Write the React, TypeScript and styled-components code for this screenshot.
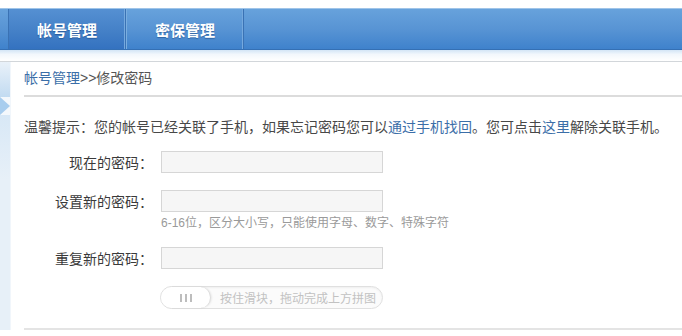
import React from "react";
import styled, { createGlobalStyle } from "styled-components";

const GlobalStyle = createGlobalStyle`
  html, body {
    margin: 0;
    padding: 0;
    background: #fff;
  }
  body {
    font-family: "Liberation Sans", "Noto Sans CJK SC", sans-serif;
    color: #333;
    overflow: hidden;
  }
`;

export default function App() {
  return (
    <>
      <GlobalStyle />
      <StyledPage>
        <StyledNav>
          <StyledTab $active>帐号管理</StyledTab>
          <StyledTab>密保管理</StyledTab>
        </StyledNav>
        <StyledNavShade />
        <StyledBody>
          <StyledSide>
            <StyledSideTop />
            <StyledPointer />
            <StyledSideRest />
          </StyledSide>
          <StyledContent>
            <StyledCrumb>
              <StyledLink>帐号管理</StyledLink>&gt;&gt;修改密码
            </StyledCrumb>
            <StyledTip>
              温馨提示：您的帐号已经关联了手机，如果忘记密码您可以
              <StyledLink>通过手机找回</StyledLink>。您可点击
              <StyledLink>这里</StyledLink>解除关联手机。
            </StyledTip>
            <StyledForm>
              <StyledField>
                <StyledLabel>现在的密码：</StyledLabel>
                <StyledInput type="password" />
              </StyledField>
              <StyledField>
                <StyledLabel>设置新的密码：</StyledLabel>
                <StyledInput type="password" />
                <StyledHint>6-16位，区分大小写，只能使用字母、数字、特殊字符</StyledHint>
              </StyledField>
              <StyledField>
                <StyledLabel>重复新的密码：</StyledLabel>
                <StyledInput type="password" />
              </StyledField>
              <StyledField>
                <span />
                <StyledSlider>
                  <StyledKnob>
                    <StyledGrip />
                    <StyledGrip />
                    <StyledGrip />
                  </StyledKnob>
                  <StyledSliderText>按住滑块，拖动完成上方拼图</StyledSliderText>
                </StyledSlider>
              </StyledField>
            </StyledForm>
            <StyledFooterLine />
          </StyledContent>
        </StyledBody>
      </StyledPage>
    </>
  );
}

const StyledPage = styled.div`
  padding-top: 8px;
  height: 328px;
`;

const StyledNav = styled.div`
  display: flex;
  height: 42px;
  padding-left: 8px;
  box-sizing: border-box;
  border-top: 1px solid #9fc4e8;
  border-bottom: 1px solid #3570b4;
  background: linear-gradient(to bottom, #67a2dc 0%, #5894d4 50%, #3f82cc 100%);
`;

const StyledTab = styled.div<{ $active?: boolean }>`
  width: 116px;
  display: flex;
  align-items: center;
  justify-content: center;
  font-size: 15px;
  font-weight: bold;
  color: #fff;
  text-shadow: 0 1px 1px rgba(20, 60, 120, 0.5);
  border-left: 1px solid ${(p) => (p.$active ? "#3a72b4" : "#7aaee0")};
  border-right: 1px solid #3a72b4;
  box-shadow: inset -1px 0 0 #75a9de;
  background: ${(p) =>
    p.$active
      ? "linear-gradient(to bottom, #5590d2 0%, #4682c8 50%, #3472c0 100%)"
      : "transparent"};
`;

const StyledNavShade = styled.div`
  height: 11px;
  border-bottom: 1px solid #d2d6da;
  background: linear-gradient(to bottom, #d3e5f6 0%, #f2f7fc 40%, #fff 100%);
`;

const StyledBody = styled.div`
  display: flex;
`;

const StyledSide = styled.div`
  width: 10px;
  display: flex;
  flex-direction: column;
  background: #e6eff8;
  border-right: 1px solid #f1f6fb;
`;

const StyledSideTop = styled.div`
  height: 35px;
  background: linear-gradient(to bottom, #e9f1f9, #c2dbf1);
`;

const StyledPointer = styled.div`
  width: 0;
  height: 0;
  border-top: 9px solid transparent;
  border-bottom: 9px solid transparent;
  border-left: 10px solid #a8cdee;
  background: #f4f8fc;
`;

const StyledSideRest = styled.div`
  flex: 1;
  background: linear-gradient(to bottom, #d8e8f6, #e7f0f8 30%);
`;

const StyledContent = styled.div`
  flex: 1;
  padding-left: 13px;
`;

const StyledCrumb = styled.div`
  height: 33px;
  line-height: 33px;
  font-size: 14px;
  color: #555;
  border-bottom: 2px solid #dcdcdc;
`;

const StyledLink = styled.span`
  color: #3b6ea8;
`;

const StyledTip = styled.div`
  margin-top: 20px;
  line-height: 20px;
  font-size: 14px;
  color: #484848;
  white-space: nowrap;
`;

const StyledForm = styled.div`
  display: flex;
  flex-direction: column;
  gap: 17px;
  padding-top: 14px;
`;

const StyledField = styled.div`
  display: grid;
  grid-template-columns: 129px 222px;
  column-gap: 8px;
  align-items: center;
`;

const StyledLabel = styled.label`
  text-align: right;
  font-size: 14px;
  color: #3a3a3a;
  white-space: nowrap;
`;

const StyledInput = styled.input`
  box-sizing: border-box;
  width: 222px;
  height: 22px;
  margin: 0;
  border: 1px solid #d6d6d6;
  background: #f6f6f6;
  outline: none;
`;

const StyledHint = styled.div`
  grid-column: 2;
  margin-top: 4px;
  line-height: 14px;
  font-size: 12px;
  color: #9a9a9a;
  white-space: nowrap;
`;

const StyledSlider = styled.div`
  box-sizing: border-box;
  width: 223px;
  height: 23px;
  margin-left: -1px;
  display: flex;
  align-items: center;
  border: 1px solid #e0e0e0;
  border-radius: 12px;
  background: #fbfbfb;
  box-shadow: inset 0 1px 2px rgba(0, 0, 0, 0.05);
`;

const StyledKnob = styled.div`
  box-sizing: border-box;
  width: 50px;
  height: 21px;
  display: flex;
  align-items: center;
  justify-content: center;
  gap: 3px;
  border-radius: 11px;
  border-right: 1px solid #dcdcdc;
  background: #fff;
  box-shadow: 1px 0 2px rgba(0, 0, 0, 0.08);
`;

const StyledGrip = styled.span`
  width: 2px;
  height: 8px;
  background: #bdbdbd;
`;

const StyledSliderText = styled.span`
  margin-left: 9px;
  font-size: 12px;
  color: #c2c2c2;
  white-space: nowrap;
`;

const StyledFooterLine = styled.div`
  margin-top: 19px;
  border-top: 2px solid #e4e4e4;
`;
